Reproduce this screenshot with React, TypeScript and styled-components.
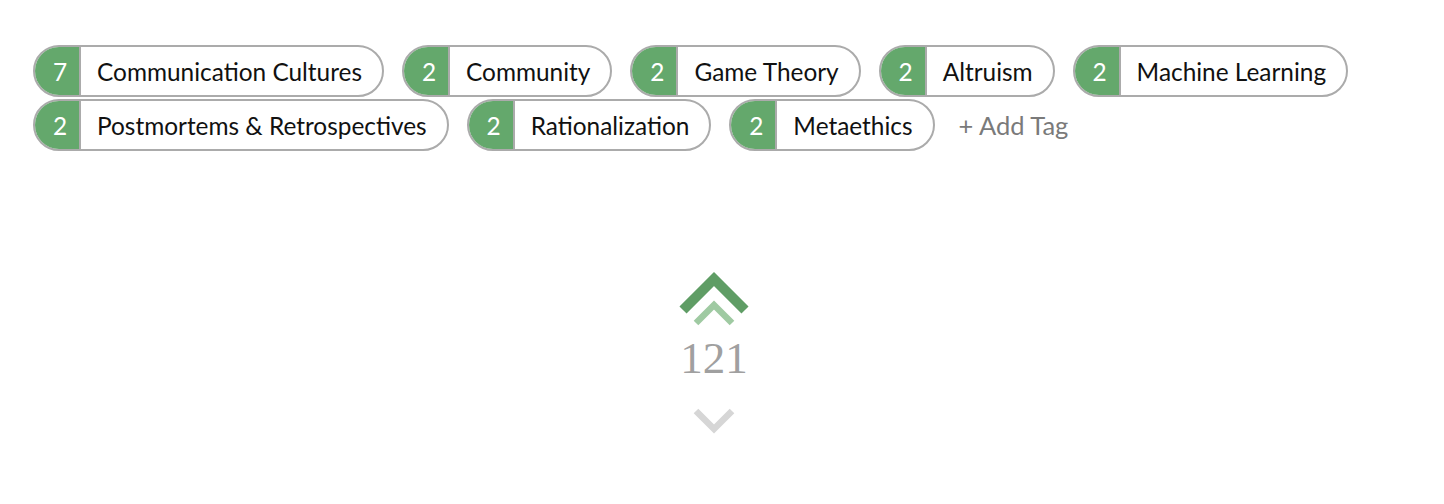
import React from "react";
import styled, { createGlobalStyle } from "styled-components";

const GlobalStyle = createGlobalStyle`
  html, body {
    margin: 0;
    padding: 0;
    background: #ffffff;
  }
  body {
    font-family: "Lato", "Open Sans", sans-serif;
  }
`;

const tags = [
  { count: 7, name: "Communication Cultures" },
  { count: 2, name: "Community" },
  { count: 2, name: "Game Theory" },
  { count: 2, name: "Altruism" },
  { count: 2, name: "Machine Learning" },
  { count: 2, name: "Postmortems & Retrospectives" },
  { count: 2, name: "Rationalization" },
  { count: 2, name: "Metaethics" },
];

const Page = styled.div`
  padding: 45px 33px 0 33px;
`;

const TagList = styled.div`
  display: flex;
  flex-wrap: wrap;
  align-items: center;
  column-gap: 18px;
  row-gap: 2px;
  max-width: 1340px;
`;

const Chip = styled.div`
  display: flex;
  align-items: stretch;
  height: 52px;
  box-sizing: border-box;
  border: 2px solid #ababab;
  border-radius: 26px;
  overflow: hidden;
  font-size: 24.4px;
  color: #111;
  cursor: pointer;
`;

const Count = styled.span`
  display: flex;
  align-items: center;
  justify-content: center;
  width: 46px;
  background: #64a86c;
  color: #fff;
  border-right: 2px solid #ababab;
  padding-left: 6px;
  box-sizing: border-box;
`;

const Label = styled.span`
  display: flex;
  align-items: center;
  padding: 0 20px 0 16px;
`;

const AddTag = styled.span`
  font-size: 25.5px;
  color: #7a7a7a;
  margin-left: 6px;
  cursor: pointer;
`;

const Vote = styled.div`
  display: flex;
  flex-direction: column;
  align-items: center;
  padding-top: 120px;
  padding-right: 16px;
`;

const Score = styled.div`
  font-family: "Liberation Serif", "Times New Roman", serif;
  font-size: 45px;
  line-height: 1;
  color: #a0a0a0;
  margin-top: 9px;
  margin-bottom: 24px;
`;

const UpVote = () => (
  <svg width="76" height="56" viewBox="0 0 76 56">
    <polyline points="7,39 38,8 69,39" fill="none" stroke="#5f9d65" strokeWidth="10" />
    <polyline points="20,52 38,34 56,52" fill="none" stroke="#9fcaa2" strokeWidth="6.5" />
  </svg>
);

const DownVote = () => (
  <svg width="50" height="34" viewBox="0 0 50 34">
    <polyline points="7,6 25,24 43,6" fill="none" stroke="#d6d6d6" strokeWidth="6.5" />
  </svg>
);

export default function App() {
  return (
    <Page>
      <GlobalStyle />
      <TagList>
        {tags.map((t) => (
          <Chip key={t.name}>
            <Count>{t.count}</Count>
            <Label>{t.name}</Label>
          </Chip>
        ))}
        <AddTag>+ Add Tag</AddTag>
      </TagList>
      <Vote>
        <UpVote />
        <Score>121</Score>
        <DownVote />
      </Vote>
    </Page>
  );
}
